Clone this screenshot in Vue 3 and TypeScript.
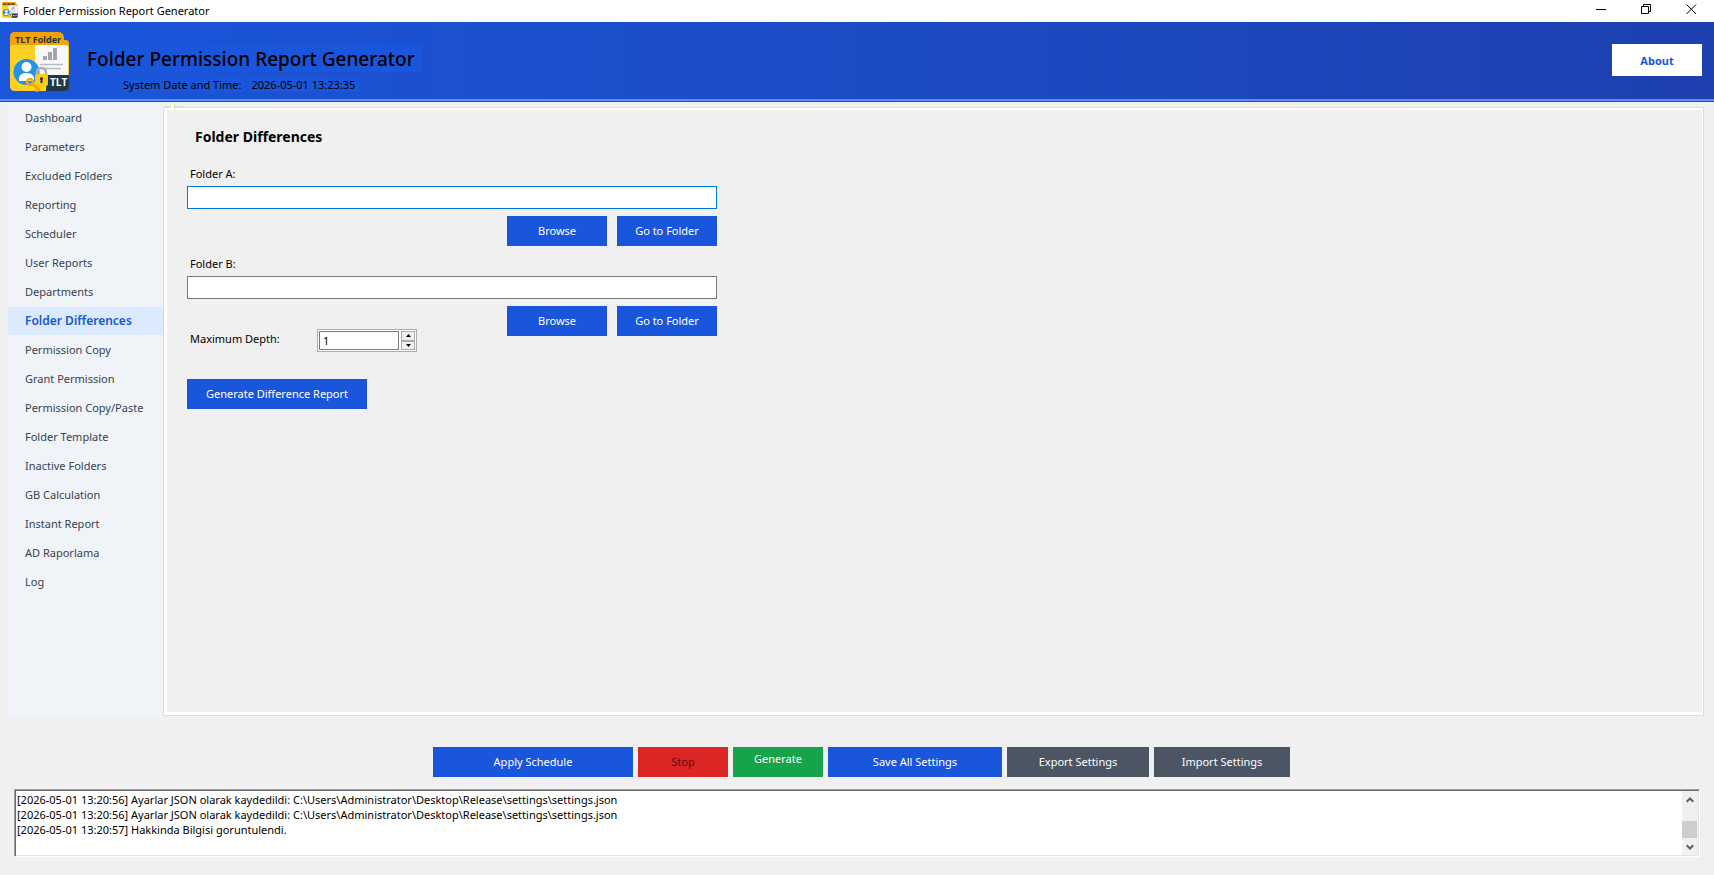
<script setup lang="ts">
import { ref } from 'vue'

interface Action {
  label: string
  kind: string
  size: string
}

const appName = 'Folder Permission Report Generator'
const menu: string[] = [
  'Dashboard',
  'Parameters',
  'Excluded Folders',
  'Reporting',
  'Scheduler',
  'User Reports',
  'Departments',
  'Folder Differences',
  'Permission Copy',
  'Grant Permission',
  'Permission Copy/Paste',
  'Folder Template',
  'Inactive Folders',
  'GB Calculation',
  'Instant Report',
  'AD Raporlama',
  'Log',
]
const active = ref('Folder Differences')
const folderA = ref('')
const folderB = ref('')
const depth = ref(1)
const logText = ref(
  [
    '[2026-05-01 13:20:56] Ayarlar JSON olarak kaydedildi: C:\\Users\\Administrator\\Desktop\\Release\\settings\\settings.json',
    '[2026-05-01 13:20:56] Ayarlar JSON olarak kaydedildi: C:\\Users\\Administrator\\Desktop\\Release\\settings\\settings.json',
    '[2026-05-01 13:20:57] Hakkinda Bilgisi goruntulendi.',
  ].join('\n'),
)
const actions: Action[] = [
  { label: 'Apply Schedule', kind: 'primary', size: 'w-xl' },
  { label: 'Stop', kind: 'danger', size: 'w-sm' },
  { label: 'Generate', kind: 'success', size: 'w-sm' },
  { label: 'Save All Settings', kind: 'primary', size: 'w-lg' },
  { label: 'Export Settings', kind: 'neutral', size: 'w-md' },
  { label: 'Import Settings', kind: 'neutral', size: 'w-im' },
]

function step(by: number): void {
  depth.value = Math.max(1, depth.value + by)
}
</script>

<template>
  <div class="window">
    <svg class="defs" width="0" height="0" aria-hidden="true">
      <symbol id="app-logo" viewBox="0 0 60 60">
        <path d="M5 0H48Q53 0 54 5V8H56Q59 8 59 12V24H0V5Q0 0 5 0Z" fill="#f3a307" />
        <path d="M0 15Q0 13 3 13H57L59 15V54Q59 59 54 59H5Q0 59 0 54Z" fill="#fdd023" />
        <path d="M27 13H56Q58 13 58 15V43H25V15Q25 13 27 13Z" fill="#f8f8f8" />
        <path d="M33 24h4v4h-4zM38 20h4v8h-4zM43 16h4v12h-4z" fill="#a3a5ad" />
        <path d="M30 32.500H53M36 36.500H51" stroke="#b9bdc8" stroke-width="1.500" />
        <path d="M37 43H59V55Q59 59 55 59H36Z" fill="#22384a" />
        <circle cx="16.500" cy="40" r="13" fill="#2493e6" />
        <circle cx="16.500" cy="35" r="5" fill="#fff" />
        <path d="M9 49V46Q10 41 16.500 41Q23 41 24 46V49Z" fill="#fff" />
        <path d="M27 44V41Q27 36 31.500 36Q36 36 36 41V44" fill="none" stroke="#a9b0bd" stroke-width="2.500" />
        <rect x="25" y="42" width="13" height="12" rx="2" fill="#fccb1c" />
        <path d="M31.500 45.500V51M30 46.500h3" stroke="#33342c" stroke-width="2" />
        <circle cx="20" cy="50" r="3" fill="none" stroke="#f5a50b" stroke-width="2.500" />
        <path d="M22 52L30 58M27 56V60" stroke="#f5a50b" stroke-width="2.500" />
      </symbol>
    </svg>

    <div class="titlebar">
      <svg class="title-icon" viewBox="0 0 60 60" aria-hidden="true">
        <use href="#app-logo" />
        <path d="M5 8H49" stroke="#5d4a1c" stroke-width="6" stroke-dasharray="12 3" />
        <path d="M41 51H56" stroke="#c9d0d6" stroke-width="5" stroke-dasharray="4 2" />
      </svg>
      <span class="title-text">{{ appName }}</span>
      <div class="window-buttons">
        <button type="button" aria-label="Minimize">
          <svg width="11" height="11" viewBox="0 0 11 11"><path d="M0 5.500H10" /></svg>
        </button>
        <button type="button" aria-label="Restore">
          <svg width="11" height="11" viewBox="0 0 11 11"><path d="M.5 2.500H7.500V9.500H.5ZM2.500 2.500V.5H9.500V7.500H7.500" /></svg>
        </button>
        <button type="button" aria-label="Close">
          <svg width="11" height="11" viewBox="0 0 11 11"><path d="M.5 .5L10 10M10 .5L.5 10" /></svg>
        </button>
      </div>
    </div>

    <header class="banner">
      <svg class="banner-logo" viewBox="0 0 60 60" role="img" aria-label="TLT Folder">
        <use href="#app-logo" />
        <text x="5" y="11" font-size="9" fill="#2b3034">TLT Folder</text>
        <text x="40" y="54" font-size="10" fill="#fff">TLT</text>
      </svg>
      <div class="banner-text">
        <h1>{{ appName }}</h1>
        <p class="clock"><span>System Date and Time:</span><span>2026-05-01 13:23:35</span></p>
      </div>
      <button type="button" class="about">About</button>
    </header>

    <main class="workspace">
      <nav class="sidebar">
        <button
          v-for="item in menu"
          :key="item"
          type="button"
          :class="{ active: item === active }"
          @click="active = item"
        >
          {{ item }}
        </button>
      </nav>
      <section class="page">
        <svg class="tab-stub" width="18" height="5" viewBox="0 0 18 5" aria-hidden="true">
          <path d="M0 2.500H18" stroke="#dcdcdc" />
          <path d="M6 0h4v5h-4z" fill="#fff" />
          <path d="M9.500 0V5" stroke="#dede9a" />
        </svg>
        <h2>Folder Differences</h2>
        <div class="field">
          <label for="folder-a">Folder A:</label>
          <input id="folder-a" v-model="folderA" class="focused" type="text" />
          <div class="field-buttons">
            <button type="button" class="btn primary">Browse</button>
            <button type="button" class="btn primary">Go to Folder</button>
          </div>
        </div>
        <div class="field">
          <label for="folder-b">Folder B:</label>
          <input id="folder-b" v-model="folderB" type="text" />
          <div class="field-buttons">
            <button type="button" class="btn primary">Browse</button>
            <button type="button" class="btn primary">Go to Folder</button>
          </div>
        </div>
        <div class="depth">
          <label for="depth">Maximum Depth:</label>
          <div class="spinner">
            <input id="depth" v-model.number="depth" type="number" min="1" />
            <div class="steps">
              <button type="button" aria-label="Increase" @click="step(1)">
                <svg width="5" height="3" viewBox="0 0 5 3"><path d="M0 3L2.500 0L5 3Z" /></svg>
              </button>
              <button type="button" aria-label="Decrease" @click="step(-1)">
                <svg width="5" height="3" viewBox="0 0 5 3"><path d="M0 0L2.500 3L5 0Z" /></svg>
              </button>
            </div>
          </div>
        </div>
        <button type="button" class="btn primary report">Generate Difference Report</button>
      </section>
    </main>

    <div class="actions">
      <button v-for="a in actions" :key="a.label" type="button" class="btn" :class="[a.kind, a.size]">
        {{ a.label }}
      </button>
    </div>

    <div class="log">
      <textarea v-model="logText" readonly aria-label="Log output" rows="4" wrap="off"></textarea>
      <div class="scrollbar">
        <button type="button" aria-label="Scroll up">
          <svg width="8" height="6" viewBox="0 0 8 6"><path d="M.7 4.800L4 1.500L7.300 4.800" /></svg>
        </button>
        <div class="thumb"></div>
        <button type="button" aria-label="Scroll down">
          <svg width="8" height="6" viewBox="0 0 8 6"><path d="M.7 1.200L4 4.500L7.300 1.200" /></svg>
        </button>
      </div>
    </div>
  </div>
</template>

<style>
body {
  margin: 0;
  background: #f0f0f0;
}
</style>

<style scoped>
.window {
  display: flex;
  flex-direction: column;
  min-height: 100vh;
  background: #f0f0f0;
  color: #000;
  font: 11px/15px "Noto Sans", "Open Sans", sans-serif;
}
.window *,
.window {
  box-sizing: border-box;
}
button,
input,
textarea {
  margin: 0;
  padding: 0;
  border: 0;
  border-radius: 0;
  background: none;
  color: inherit;
  font: inherit;
  outline: none;
}
h1,
h2,
p {
  margin: 0;
}
.defs {
  position: absolute;
}

.titlebar {
  display: flex;
  align-items: center;
  height: 22px;
  padding: 0 0 2px 2px;
  background: #fff;
}
.title-icon {
  width: 16px;
  height: 16px;
}
.title-text {
  margin-left: 5px;
}
.window-buttons {
  display: flex;
  margin-left: auto;
}
.window-buttons button {
  display: flex;
  align-items: center;
  justify-content: center;
  width: 45px;
  height: 18px;
  margin-bottom: 2px;
}
.window-buttons svg {
  fill: none;
  stroke: #000;
}

.banner {
  display: flex;
  align-items: center;
  height: 80px;
  padding: 0 12px 3px 10px;
  border-bottom: 1px solid #1d4fc4;
  background:
    linear-gradient(#5c8df8, #5c8df8) bottom / 100% 2px no-repeat,
    linear-gradient(90deg, #1a56db, #1e40af);
}
.banner-logo {
  width: 60px;
  height: 60px;
  margin-top: 4px;
  overflow: visible;
  font-family: "Open Sans", sans-serif;
  font-weight: 700;
}
.banner-text {
  margin: 16px 0 0 12px;
}
h1 {
  padding: 2px 7px 0 5px;
  background: #1a56db;
  font-size: 19px;
  font-weight: 500;
  line-height: 26px;
}
.clock {
  display: flex;
  gap: 3px;
  padding: 5px 0 0 38px;
}
.clock span {
  padding: 0 4px 0 3px;
  background: #1a56db;
}
.about {
  width: 90px;
  height: 32px;
  margin-left: auto;
  background: #fff;
  color: #1a56db;
  font-weight: 700;
}

.workspace {
  display: flex;
  flex: 1;
  padding: 2px 10px 0 8px;
}
.sidebar {
  display: flex;
  flex-direction: column;
  gap: 1px;
  width: 155px;
  background: #f0f4f9;
}
.sidebar button {
  height: 28px;
  padding: 0 17px 2px;
  color: #374151;
  text-align: left;
  white-space: nowrap;
}
.sidebar .active {
  background: #dbeafe;
  color: #1a56db;
  font-size: 12px;
  font-weight: 600;
}
.page {
  position: relative;
  flex: 1;
  margin: 3px 0 1px;
  padding: 17px 17px 0 20px;
  border: 1px solid #dcdcdc;
  box-shadow: inset 3px 2px #fff, inset -1px -3px #fff;
}
.tab-stub {
  position: absolute;
  top: -4px;
  left: 1px;
}
h2 {
  margin: 2px 0 19px;
  padding-left: 11px;
  font-size: 14px;
  line-height: 20px;
  font-weight: 700;
}
.field {
  display: flex;
  flex-direction: column;
  width: 533px;
  max-width: 100%;
  padding-left: 3px;
  margin-bottom: 10px;
}
.field label,
.depth label {
  padding-left: 3px;
}
.field label {
  line-height: 16px;
  margin-bottom: 4px;
}
.field input {
  height: 23px;
  padding: 0 4px;
  border: 1px solid #7a7a7a;
  background: #fff;
}
.field input.focused {
  border-color: #0078d7;
}
.field-buttons {
  display: flex;
  justify-content: flex-end;
  gap: 10px;
  margin-top: 7px;
}
.btn {
  width: 100px;
  height: 30px;
  padding-bottom: 2px;
  color: #fff;
  white-space: nowrap;
}
.primary {
  background: #1a56db;
}
.danger {
  background: #dc2626;
  color: #5c0d10;
}
.success {
  padding-bottom: 8px;
  background: #16a34a;
}
.neutral {
  background: #4b5563;
}
.depth {
  display: flex;
  align-items: center;
  margin: -17px 0 27px 3px;
}
.depth label {
  width: 130px;
  padding-bottom: 4px;
}
.spinner {
  display: flex;
  gap: 2px;
  width: 100px;
  height: 23px;
  padding: 1px;
  border: 1px solid #abadb3;
  background: #fff;
}
.spinner input {
  width: 80px;
  padding: 0 3px;
  border: 1px solid #7a7a7a;
  background: #fff;
  appearance: textfield;
}
.spinner input::-webkit-inner-spin-button {
  display: none;
}
.steps {
  display: flex;
  flex: 1;
  flex-direction: column;
  background: #f0f0f0;
}
.steps button {
  display: flex;
  flex: 1;
  align-items: center;
  justify-content: center;
  border: 1px solid #acacac;
}
.report {
  width: 180px;
  margin-left: 3px;
}

.actions {
  display: flex;
  flex-wrap: wrap;
  justify-content: center;
  gap: 5px;
  padding: 30px 0 12px 9px;
}
.w-xl {
  width: 200px;
}
.w-lg {
  width: 174px;
}
.w-md {
  width: 142px;
}
.w-im {
  width: 136px;
}
.w-sm {
  width: 90px;
}

.log {
  display: flex;
  height: 68px;
  margin: 0 14px 18px;
  border: 1px solid;
  border-color: #a0a0a0 #fff #fff #a0a0a0;
  box-shadow: inset 1px 1px #696969, inset -1px -1px #e3e3e3;
  background: #fff;
}
.log textarea {
  flex: 1;
  margin: 2px 0 2px 1px;
  padding: 0 1px;
  resize: none;
  overflow: hidden;
  white-space: pre;
}
.scrollbar {
  display: flex;
  flex-direction: column;
  justify-content: space-between;
  width: 16px;
  margin: 1px 1px 1px 0;
  background: #f0f0f0;
}
.scrollbar button {
  display: flex;
  align-items: center;
  justify-content: center;
  height: 17px;
}
.scrollbar svg {
  fill: none;
  stroke: #606060;
  stroke-width: 2;
}
.thumb {
  width: 15px;
  height: 17px;
  margin-top: 13px;
  background: #cdcdcd;
}
</style>
